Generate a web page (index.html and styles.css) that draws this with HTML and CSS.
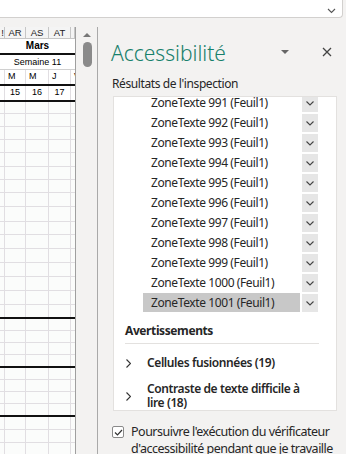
FILE: index.html
```html
<!DOCTYPE html>
<html lang="fr">
<head>
  <meta charset="UTF-8">
  <title>Accessibilité</title>
  <link rel="stylesheet" href="styles.css">
</head>
<body>
  <div class="topbar">
    <svg class="topbar-chev" width="9" height="6" viewBox="0 0 9 6"><path d="M1 1l3.5 3.5L8 1" fill="none" stroke="#555" stroke-width="1.1"/></svg>
  </div>

  <div class="main">
    <div class="sheet">
      <div class="colhead">
        <div>!</div><div>AR</div><div>AS</div><div>AT</div><div></div>
      </div>
      <div class="merged month thick">Mars</div>
      <div class="merged week">Semaine 11</div>
      <div class="row days thick"><div></div><div>M</div><div>M</div><div>J</div><div>V</div></div>
      <div class="row nums thick"><div></div><div>15</div><div>16</div><div>17</div><div></div></div>
      <div class="row h12"><div></div><div></div><div></div><div></div><div></div></div>
      <div class="row h13"><div></div><div></div><div></div><div></div><div></div></div>
      <div class="row h13"><div></div><div></div><div></div><div></div><div></div></div>
      <div class="row h13"><div></div><div></div><div></div><div></div><div></div></div>
      <div class="row h14"><div></div><div></div><div></div><div></div><div></div></div>
      <div class="row h13"><div></div><div></div><div></div><div></div><div></div></div>
      <div class="row h13"><div></div><div></div><div></div><div></div><div></div></div>
      <div class="row h14"><div></div><div></div><div></div><div></div><div></div></div>
      <div class="row h15"><div></div><div></div><div></div><div></div><div></div></div>
      <div class="row h13"><div></div><div></div><div></div><div></div><div></div></div>
      <div class="row h14"><div></div><div></div><div></div><div></div><div></div></div>
      <div class="row h14"><div></div><div></div><div></div><div></div><div></div></div>
      <div class="row h14"><div></div><div></div><div></div><div></div><div></div></div>
      <div class="row h14"><div></div><div></div><div></div><div></div><div></div></div>
      <div class="row h14"><div></div><div></div><div></div><div></div><div></div></div>
      <div class="row h14 thick"><div></div><div></div><div></div><div></div><div></div></div>
      <div class="row h12"><div></div><div></div><div></div><div></div><div></div></div>
      <div class="row h12"><div></div><div></div><div></div><div></div><div></div></div>
      <div class="row h12"><div></div><div></div><div></div><div></div><div></div></div>
      <div class="row h12 thick"><div></div><div></div><div></div><div></div><div></div></div>
      <div class="row h12"><div></div><div></div><div></div><div></div><div></div></div>
      <div class="row h12"><div></div><div></div><div></div><div></div><div></div></div>
      <div class="row h12"><div></div><div></div><div></div><div></div><div></div></div>
      <div class="row h12 thick"><div></div><div></div><div></div><div></div><div></div></div>
      <div class="row h13"><div></div><div></div><div></div><div></div><div></div></div>
      <div class="row h13"><div></div><div></div><div></div><div></div><div></div></div>
      <div class="row h12"><div></div><div></div><div></div><div></div><div></div></div>
    </div>

    <div class="vscroll">
      <div class="vscroll-up"></div>
      <div class="vscroll-thumb"></div>
    </div>

    <div class="panel">
      <div class="panel-head">
        <h1 class="panel-title">Accessibilité</h1>
        <span class="panel-menu"></span>
        <svg class="panel-close" width="10" height="10" viewBox="0 0 10 10"><path d="M1 1l8 8M9 1l-8 8" stroke="#444" stroke-width="1.3"/></svg>
      </div>
      <div class="panel-label">Résultats de l'inspection</div>

      <div class="results">
        <div class="results-list">
          <div class="results-scroll">
            <div class="item"><span class="item-name">ZoneTexte 991 (Feuil1)</span><span class="item-btn"><svg width="8" height="5" viewBox="0 0 8 5"><path d="M.5 .5L4 4 7.5.5" fill="none" stroke="#444" stroke-width="1.1"/></svg></span></div>
            <div class="item"><span class="item-name">ZoneTexte 992 (Feuil1)</span><span class="item-btn"><svg width="8" height="5" viewBox="0 0 8 5"><path d="M.5 .5L4 4 7.5.5" fill="none" stroke="#444" stroke-width="1.1"/></svg></span></div>
            <div class="item"><span class="item-name">ZoneTexte 993 (Feuil1)</span><span class="item-btn"><svg width="8" height="5" viewBox="0 0 8 5"><path d="M.5 .5L4 4 7.5.5" fill="none" stroke="#444" stroke-width="1.1"/></svg></span></div>
            <div class="item"><span class="item-name">ZoneTexte 994 (Feuil1)</span><span class="item-btn"><svg width="8" height="5" viewBox="0 0 8 5"><path d="M.5 .5L4 4 7.5.5" fill="none" stroke="#444" stroke-width="1.1"/></svg></span></div>
            <div class="item"><span class="item-name">ZoneTexte 995 (Feuil1)</span><span class="item-btn"><svg width="8" height="5" viewBox="0 0 8 5"><path d="M.5 .5L4 4 7.5.5" fill="none" stroke="#444" stroke-width="1.1"/></svg></span></div>
            <div class="item"><span class="item-name">ZoneTexte 996 (Feuil1)</span><span class="item-btn"><svg width="8" height="5" viewBox="0 0 8 5"><path d="M.5 .5L4 4 7.5.5" fill="none" stroke="#444" stroke-width="1.1"/></svg></span></div>
            <div class="item"><span class="item-name">ZoneTexte 997 (Feuil1)</span><span class="item-btn"><svg width="8" height="5" viewBox="0 0 8 5"><path d="M.5 .5L4 4 7.5.5" fill="none" stroke="#444" stroke-width="1.1"/></svg></span></div>
            <div class="item"><span class="item-name">ZoneTexte 998 (Feuil1)</span><span class="item-btn"><svg width="8" height="5" viewBox="0 0 8 5"><path d="M.5 .5L4 4 7.5.5" fill="none" stroke="#444" stroke-width="1.1"/></svg></span></div>
            <div class="item"><span class="item-name">ZoneTexte 999 (Feuil1)</span><span class="item-btn"><svg width="8" height="5" viewBox="0 0 8 5"><path d="M.5 .5L4 4 7.5.5" fill="none" stroke="#444" stroke-width="1.1"/></svg></span></div>
            <div class="item"><span class="item-name">ZoneTexte 1000 (Feuil1)</span><span class="item-btn"><svg width="8" height="5" viewBox="0 0 8 5"><path d="M.5 .5L4 4 7.5.5" fill="none" stroke="#444" stroke-width="1.1"/></svg></span></div>
            <div class="item selected"><span class="item-name">ZoneTexte 1001 (Feuil1)</span><span class="item-btn"><svg width="8" height="5" viewBox="0 0 8 5"><path d="M.5 .5L4 4 7.5.5" fill="none" stroke="#444" stroke-width="1.1"/></svg></span></div>
          </div>
        </div>

        <div class="warnings">
          <div class="warnings-title">Avertissements</div>
          <div class="warning">
            <svg class="warning-chev" width="5" height="9" viewBox="0 0 5 9"><path d="M.5 .5L4.5 4.5 .5 8.5" fill="none" stroke="#333" stroke-width="1.1"/></svg>
            <span>Cellules fusionnées (19)</span>
          </div>
          <div class="warning">
            <svg class="warning-chev" width="5" height="9" viewBox="0 0 5 9"><path d="M.5 .5L4.5 4.5 .5 8.5" fill="none" stroke="#333" stroke-width="1.1"/></svg>
            <span>Contraste de texte difficile à lire (18)</span>
          </div>
        </div>
      </div>

      <label class="keep-running">
        <span class="checkbox"><svg width="9" height="7" viewBox="0 0 9 7"><path d="M1 3.5l2.5 2.5L8 1" fill="none" stroke="#333" stroke-width="1.2"/></svg></span>
        <span>Poursuivre l'exécution du vérificateur d'accessibilité pendant que je travaille</span>
      </label>
    </div>
  </div>
</body>
</html>
```

FILE: styles.css
```css
html, body {
  margin: 0;
  height: 100%;
}
body {
  font-family: "Noto Sans", sans-serif;
  background-color: #f3f2f1;
  color: #262626;
  overflow: hidden;
}

/* barre du haut */
.topbar {
  height: 17px;
  width: 342px;
  background-color: #fff;
  border-bottom: 1px solid #d2d0ce;
  border-right: 1px solid #d2d0ce;
  border-bottom-right-radius: 4px;
  display: flex;
  justify-content: flex-end;
  align-items: flex-end;
}
.topbar-chev {
  margin: 0 6px 3px 0;
}

.main {
  display: flex;
  margin-top: 9px;
  height: 427px;
}

/* feuille */
.sheet {
  width: 75px;
  border-right: 1px solid #9f9f9f;
  background-color: #fbfcfb;
  font-family: "Liberation Sans", Arial, sans-serif;
  font-size: 9px;
  color: #000;
  overflow: hidden;
}
.colhead, .row {
  display: grid;
  grid-template-columns: 5px 21px 23px 22px 4px;
}
.colhead {
  height: 11px;
  background-color: #f4f4f4;
  border-bottom: 1px solid #c6c6c6;
  font-size: 9.5px;
  line-height: 11px;
  color: #222;
}
.colhead div {
  border-right: 1px solid #c6c6c6;
  text-align: center;
  overflow: hidden;
}
.colhead div:first-child {
  text-align: right;
}
.merged {
  height: 14px;
  line-height: 14px;
  text-align: center;
  background-color: #fff;
}
.month {
  font-weight: bold;
  font-size: 10px;
}
.week {
  border-bottom: 1px solid #d0d0d0;
}
.row div {
  border-right: 1px solid #e1dee2;
  border-bottom: 1px solid #e1dee2;
  box-sizing: border-box;
  overflow: hidden;
}
.row div:last-child {
  border-right: none;
}
.days, .nums {
  height: 14px;
  line-height: 13px;
  background-color: #fff;
}
.days div {
  padding-left: 3px;
}
.nums div {
  text-align: center;
}
.thick {
  border-bottom: 2px solid #111;
}
.thick div {
  border-bottom: none;
}
.h12 { height: 12px; }
.h13 { height: 13px; }
.h14 { height: 14px; }
.h15 { height: 15px; }
.thick.h12 { height: 11px; }
.thick.h14 { height: 12px; }

/* barre de défilement */
.vscroll {
  width: 21px;
  display: flex;
  flex-direction: column;
  align-items: center;
}
.vscroll-up {
  margin-top: 6px;
  margin-left: 1px;
  width: 0;
  height: 0;
  border-left: 4px solid transparent;
  border-right: 4px solid transparent;
  border-bottom: 4px solid #777;
}
.vscroll-thumb {
  margin-top: 5px;
  margin-left: 1px;
  width: 9px;
  height: 25px;
  border-radius: 5px;
  background-color: #8a8a8a;
}

/* volet */
.panel {
  flex: 1;
  border-left: 1px solid #a9a9a9;
  padding: 0 9px 0 13px;
  letter-spacing: -0.4px;
}
.panel-head {
  display: flex;
  align-items: center;
  height: 49px;
}
.panel-title {
  margin: 0;
  flex: 1;
  font-size: 21px;
  font-weight: 300;
  letter-spacing: 0;
  color: #17806b;
  padding-top: 2px;
}
.panel-menu {
  width: 0;
  height: 0;
  border-left: 4px solid transparent;
  border-right: 4px solid transparent;
  border-top: 4px solid #666;
  margin-right: 33px;
}
.panel-close {
  margin-right: 5px;
}
.panel-label {
  font-size: 12px;
  line-height: 16px;
  margin-left: 1px;
}

.results {
  margin: 4px 0 0 2px;
  background-color: #fff;
  border: 1px solid #e3e1df;
  height: 315px;
  box-sizing: border-box;
}
.results-list {
  height: 215px;
  overflow: hidden;
}
.results-scroll {
  margin-top: -4px;
}
.item {
  display: flex;
  height: 20px;
  padding-left: 29px;
  font-size: 12px;
}
.item-name {
  width: 157px;
  box-sizing: border-box;
  padding-left: 8px;
  line-height: 20px;
  white-space: nowrap;
}
.item-btn {
  width: 16px;
  height: 18px;
  margin: 1px 0 0 2px;
  background-color: #e6e6e6;
  display: flex;
  align-items: center;
  justify-content: center;
}
.selected .item-name {
  background-color: #c8c8c8;
}

.warnings {
  margin: 0 17px 0 11px;
  font-size: 12px;
  line-height: 14px;
}
.warnings-title {
  font-weight: 700;
  padding: 12px 0 5px;
  border-bottom: 1px solid #e3e1df;
}
.warning {
  display: flex;
  align-items: center;
  padding-top: 12px;
  font-weight: 600;
}
.warning-chev {
  margin: 0 16px 0 1px;
  flex-shrink: 0;
}

.keep-running {
  display: flex;
  margin-top: 12px;
  font-size: 12.5px;
  line-height: 17px;
  letter-spacing: -0.5px;
}
.checkbox {
  flex-shrink: 0;
  width: 10px;
  height: 10px;
  border: 1px solid #8a8a8a;
  border-radius: 2px;
  background-color: #fff;
  display: flex;
  align-items: center;
  justify-content: center;
  margin: 3px 7px 0 1px;
}
```
